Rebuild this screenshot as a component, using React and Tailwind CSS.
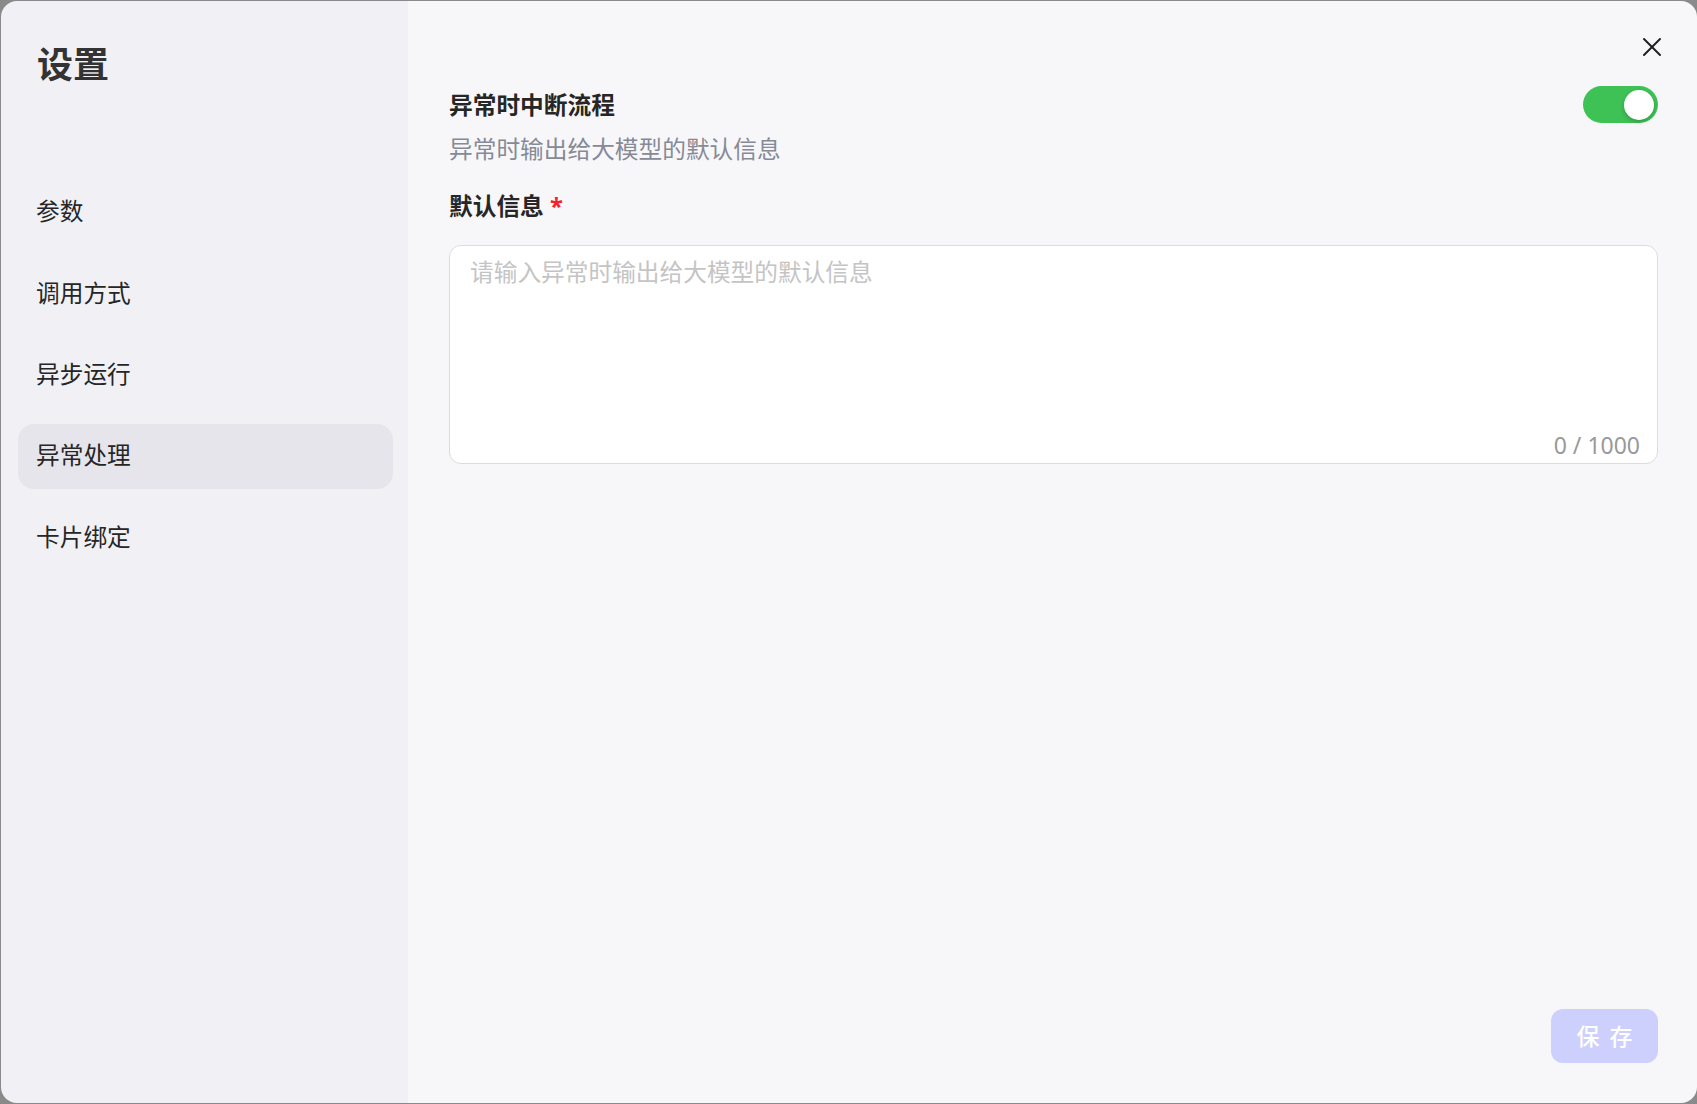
import { useState } from "react";

const menu = ["参数", "调用方式", "异步运行", "异常处理", "卡片绑定"];

const CloseIcon = function () {
    return (
        <svg width="20" height="20" viewBox="0 0 20 20" fill="none" stroke="#1f1f1f" strokeWidth="2" strokeLinecap="round">
            <path d="M2 2 L18 18" />
            <path d="M18 2 L2 18" />
        </svg>
    );
};

const App = function () {
    const [active, setActive] = useState("异常处理");
    const [enabled, setEnabled] = useState(true);
    const [text, setText] = useState("");

    return (
        <div
            className="w-full h-screen bg-[#8a8a8a] pt-[1px] pl-[1px] pb-[1px]"
            style={{ fontFamily: '"Noto Sans", "Noto Sans CJK SC", sans-serif' }}
        >
            <div className="flex w-full h-full rounded-[16px] overflow-hidden">
                {/* sidebar */}
                <aside className="w-[407px] shrink-0 bg-[#f0f0f5] pt-[40px] pl-[17px] pr-[15px]">
                    <h1 className="pl-[19px] text-[36px] leading-[48px] font-bold text-[#333333]">设置</h1>
                    <nav className="mt-[90.5px] flex flex-col gap-[16.4px]">
                        {menu.map((item) => (
                            <button
                                key={item}
                                onClick={() => setActive(item)}
                                className={
                                    item === active
                                        ? "h-[65px] rounded-[16px] bg-[#e6e5eb] px-[18px] text-left text-[23.7px] text-[#262626]"
                                        : "h-[65px] rounded-[16px] px-[18px] text-left text-[23.7px] text-[#262626]"
                                }
                            >
                                {item}
                            </button>
                        ))}
                    </nav>
                </aside>

                {/* content */}
                <main className="relative flex-1 flex flex-col bg-[#f7f7f9] pt-[85px] pl-[41px] pr-[39px] pb-[40px]">
                    <button className="absolute top-[36px] right-[35px]">
                        <CloseIcon />
                    </button>

                    <div className="flex items-center justify-between h-[37px]">
                        <h2 className="text-[23.7px] leading-[36px] font-bold text-[#262626]">异常时中断流程</h2>
                        <button
                            onClick={() => setEnabled(!enabled)}
                            className={
                                enabled
                                    ? "relative w-[75px] h-[37px] rounded-full bg-[#3ec155]"
                                    : "relative w-[75px] h-[37px] rounded-full bg-[#d4d4d8]"
                            }
                        >
                            <span
                                className={
                                    enabled
                                        ? "absolute top-[3.5px] right-[4px] w-[30px] h-[30px] rounded-full bg-white shadow-[0_2px_4px_rgba(0,0,0,0.2)]"
                                        : "absolute top-[3.5px] left-[4px] w-[30px] h-[30px] rounded-full bg-white shadow-[0_2px_4px_rgba(0,0,0,0.2)]"
                                }
                            />
                        </button>
                    </div>
                    <p className="mt-[8px] text-[23.7px] leading-[36px] text-[#868a96]">异常时输出给大模型的默认信息</p>

                    <label className="mt-[21px] text-[23.7px] leading-[36px] font-bold text-[#262626]">
                        默认信息 <span className="text-[#f5222d] font-bold">*</span>
                    </label>

                    <div className="relative mt-[21px] h-[219px] rounded-[12px] border border-[#dcdcdc] bg-white">
                        <textarea
                            value={text}
                            maxLength={1000}
                            onChange={(e) => setText(e.target.value)}
                            placeholder="请输入异常时输出给大模型的默认信息"
                            className="w-full h-full resize-none bg-transparent outline-none pt-[8px] px-[20px] text-[23.7px] leading-[36px] text-[#262626] placeholder:text-[#c4c4c4]"
                        />
                        <span className="absolute right-[17px] bottom-[5px] text-[23px] leading-[26px] text-[#999999]">
                            {text.length} / 1000
                        </span>
                    </div>

                    <div className="mt-auto flex justify-end">
                        <button className="w-[107px] h-[54px] rounded-[12px] bg-[#cdd0fc] flex items-center justify-center gap-[10px] text-[23px] font-medium text-white">
                            <span>保</span>
                            <span>存</span>
                        </button>
                    </div>
                </main>
            </div>
        </div>
    );
};

export default App;
